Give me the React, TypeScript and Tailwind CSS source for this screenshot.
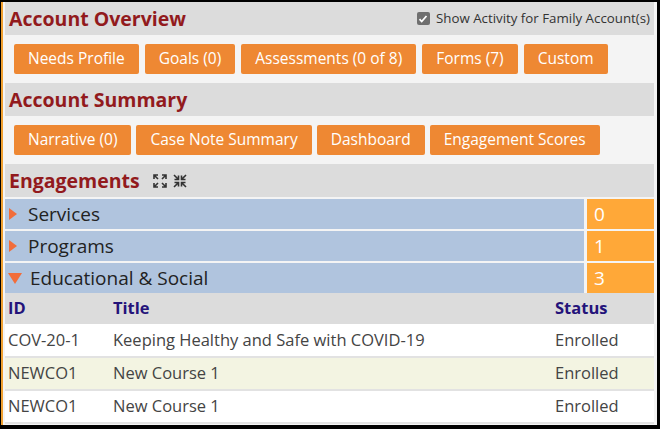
import React from 'react';

const overviewButtons = ['Needs Profile', 'Goals (0)', 'Assessments (0 of 8)', 'Forms (7)', 'Custom'];
const summaryButtons = ['Narrative (0)', 'Case Note Summary', 'Dashboard', 'Engagement Scores'];

const engagementGroups = [
  { name: 'Services', count: 0, open: false },
  { name: 'Programs', count: 1, open: false },
  { name: 'Educational & Social', count: 3, open: true },
];

const courses = [
  { id: 'COV-20-1', title: 'Keeping Healthy and Safe with COVID-19', status: 'Enrolled' },
  { id: 'NEWCO1', title: 'New Course 1', status: 'Enrolled' },
  { id: 'NEWCO1', title: 'New Course 1', status: 'Enrolled' },
];

function SectionHeader({ title, children }: { title: string; children?: React.ReactNode }) {
  return (
    <div className="h-[33px] bg-[#dcdcdc] flex items-center pl-[4px] pr-[4px]">
      <h2 className="text-[19.5px] font-bold text-[#921a1d] leading-none">{title}</h2>
      {children}
    </div>
  );
}

function ActionButton({ label }: { label: string }) {
  return (
    <button className="h-[30px] px-[14px] rounded-[2px] bg-[#ee8833] text-white text-[15.5px] leading-none">
      {label}
    </button>
  );
}

function ExpandIcon() {
  return (
    <svg className="w-[16px] h-[16px]" viewBox="0 0 16 16" fill="none" stroke="#333" strokeWidth={1.6}>
      <path d="M2 6V2h4M2 2l4 4" />
      <path d="M14 6V2h-4M14 2l-4 4" />
      <path d="M2 10v4h4M2 14l4-4" />
      <path d="M14 10v4h-4M14 14l-4-4" />
    </svg>
  );
}

function CollapseIcon() {
  return (
    <svg className="w-[16px] h-[16px]" viewBox="0 0 16 16" fill="none" stroke="#333" strokeWidth={1.6}>
      <path d="M2 2l4.5 4.5M6.5 2.5v4h-4" />
      <path d="M14 2l-4.5 4.5M9.5 2.5v4h4" />
      <path d="M2 14l4.5-4.5M6.5 13.5v-4h-4" />
      <path d="M14 14l-4.5-4.5M9.5 13.5v-4h4" />
    </svg>
  );
}

export default function App() {
  return (
    <div
      className="w-[660px] h-[429px] bg-black pt-[2px] pr-[3px] pb-[4px] pl-[1px]"
      style={{ fontFamily: '"Open Sans", "Noto Sans", sans-serif' }}
    >
      <div className="h-full border-l-2 border-[#f0a030] bg-[#f4f4f4] pl-[2px] pr-[3px] overflow-hidden">
        {/* Account overview */}
        <SectionHeader title="Account Overview">
          <label className="ml-auto flex items-center gap-[6px] text-[13.3px] text-[#333]">
            <span className="w-[13px] h-[13px] rounded-[2px] bg-[#6f6f6f] flex items-center justify-center">
              <svg className="w-[10px] h-[10px]" viewBox="0 0 10 10" fill="none" stroke="white" strokeWidth={1.8}>
                <path d="M1.5 5.2l2.2 2.3L8.5 2" />
              </svg>
            </span>
            Show Activity for Family Account(s)
          </label>
        </SectionHeader>
        <div className="flex gap-[6px] pl-[9px] py-[9px]">
          {overviewButtons.map((b) => (
            <ActionButton key={b} label={b} />
          ))}
        </div>

        {/* Account summary */}
        <SectionHeader title="Account Summary" />
        <div className="flex gap-[5px] pl-[9px] py-[9px]">
          {summaryButtons.map((b) => (
            <ActionButton key={b} label={b} />
          ))}
        </div>

        {/* Engagements */}
        <SectionHeader title="Engagements">
          <div className="flex items-center gap-[4px] ml-[12px]">
            <ExpandIcon />
            <CollapseIcon />
          </div>
        </SectionHeader>
        <div className="flex flex-col gap-[2px] mt-[2px]">
          {engagementGroups.map((g) => (
            <div key={g.name} className="flex h-[30px] gap-[3px]">
              <div className="flex-1 bg-[#b0c4de] flex items-center pl-[3px] text-[19px] text-[#222]">
                {g.open ? (
                  <span className="w-0 h-0 border-l-[7px] border-r-[7px] border-t-[11px] border-l-transparent border-r-transparent border-t-[#f26d3a] mr-[8px]" />
                ) : (
                  <span className="w-0 h-0 border-t-[6px] border-b-[6px] border-l-[8px] border-t-transparent border-b-transparent border-l-[#f26d3a] mr-[11px] ml-[1px]" />
                )}
                {g.name}
              </div>
              <div className="w-[67px] bg-[#ffa838] text-white text-[19px] flex items-center pl-[7px]">{g.count}</div>
            </div>
          ))}
        </div>

        {/* Course table */}
        <table className="w-full text-[16.5px] border-collapse">
          <thead>
            <tr className="h-[31px] bg-[#dcdcdc] text-left text-[#24137a] leading-none">
              <th className="pl-[3px] w-[108px] font-bold">ID</th>
              <th className="font-bold">Title</th>
              <th className="w-[99px] font-bold">Status</th>
            </tr>
          </thead>
          <tbody className="text-[#444]">
            {courses.map((c, i) => (
              <tr
                key={i}
                className={`h-[33px] leading-none border-b-2 border-[#e2e2e2] ${i === 1 ? 'bg-[#f3f4e2]' : 'bg-white'}`}
              >
                <td className="pl-[3px]">{c.id}</td>
                <td>{c.title}</td>
                <td>{c.status}</td>
              </tr>
            ))}
          </tbody>
        </table>
      </div>
    </div>
  );
}
